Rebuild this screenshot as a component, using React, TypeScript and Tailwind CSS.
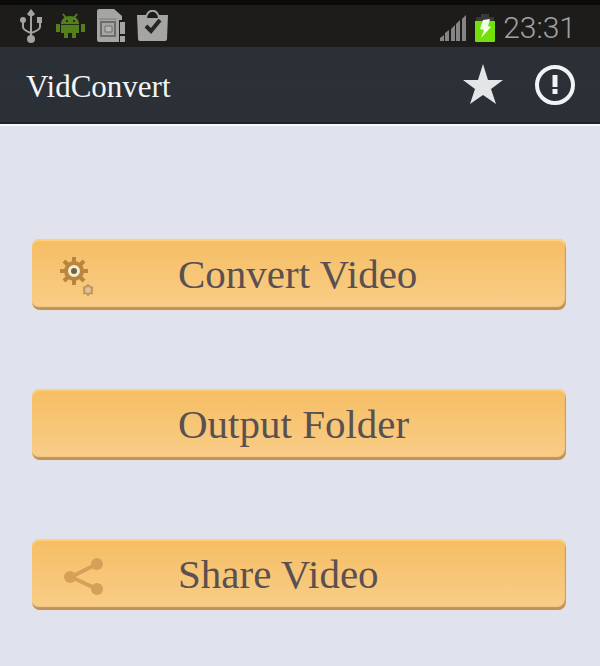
import type { ReactNode } from "react";

const UsbIcon = () => (
  <svg width="24" height="34" viewBox="0 0 24 34" fill="#a3a3a1">
    <path
      d="M11 4v26M3 12v6q0 3 8 6M20 12v6q0 3-9 6"
      fill="none"
      stroke="#a3a3a1"
      strokeWidth="2"
    />
    <path d="M11 0l4 5-2 2H9L7 5z" />
    <circle cx="3" cy="11" r="3" />
    <path d="M17 8h5v6h-5z" />
    <circle cx="11" cy="30" r="4" />
  </svg>
);

const AndroidIcon = () => (
  <svg width="29" height="26" viewBox="0 0 29 26" fill="#52801a">
    <path d="M7 1l3 4M21 1l-3 4" stroke="#52801a" strokeWidth="2" />
    <path d="M5 11c0-5 4-8 9-8s9 3 9 8z" />
    <path d="M5 12h18v8H5z" />
    <path d="M0 11h4v8H0zM25 11h4v8h-4zM8 20h4v5H8zM16 20h4v5h-4z" />
    <path d="M10 7h2v2h-2zM17 7h2v2h-2zM5 11h18v1H5z" fill="#262b17" />
  </svg>
);

const SdCardIcon = () => (
  <svg width="28" height="34" viewBox="0 0 28 34" fill="#a5a5a3">
    <path d="M0 2q0-2 2-2h15l8 7v4h-3v22H2q-2 0-2-2z" />
    <path d="M23 13h5v12h-5zM23 27h5v6h-5z" />
    <path d="M4 13h14v14H4z" fill="none" stroke="#6c6c6a" strokeWidth="2" />
    <path d="M8 17h7v6H8z" fill="#b5b5b3" stroke="#6c6c6a" />
    <path d="M2 10h18" stroke="#7d7d7b" />
  </svg>
);

const BagIcon = () => (
  <svg width="31" height="32" viewBox="0 0 31 32">
    <path d="M9 9c0-11 13-11 13 0" fill="none" stroke="#a5a5a3" strokeWidth="2" />
    <path d="M0 5h10l-1 3h13l-1-3h10l-1 24q0 2-2 2H3q-2 0-2-2z" fill="#a5a5a3" />
    <path d="M9 16l5 5 9-11" fill="none" stroke="#252523" strokeWidth="4" />
  </svg>
);

const SignalIcon = () => (
  <svg width="27" height="27" viewBox="0 0 27 27" fill="#858585">
    <path d="M0 26v-3l4-3v6zM5 26v-8l4-3v11zM11 26V14l4-4v16zM16 26V9l4-4v21zM22 26V4l4-4v26z" />
  </svg>
);

const BatteryIcon = () => (
  <svg width="20" height="30" viewBox="0 0 20 30">
    <path d="M6 1h8v4H6zM1 4h18v5H1z" fill="#373a35" />
    <path d="M0 8h20v20q0 1-1 1H1q-1 0-1-1z" fill="#73df0b" />
    <path d="M8 7l7-1-2 7 3 1-10 11 3-8-4-1z" fill="#f1ffe5" />
  </svg>
);

const StarIcon = () => (
  <svg width="42" height="42" viewBox="0 0 42 42" fill="#e4e5e6">
    <path d="M21 0l5 16h15L29 25l5 15-13-9-13 9 5-15L1 16h15z" />
  </svg>
);

const AlertIcon = () => (
  <svg width="42" height="42" viewBox="0 0 42 42" fill="none" stroke="#f2f3f4">
    <circle cx="21" cy="21" r="18" strokeWidth="4" />
    <path d="M21 11v12M21 25v5" strokeWidth="5" />
  </svg>
);

const GearsIcon = () => (
  <svg width="36" height="42" viewBox="0 0 36 42" fill="none">
    <path
      d="M14 1v28M0 15h28M4 5l20 20M24 5L4 25"
      stroke="#b9853f"
      strokeWidth="4"
    />
    <circle cx="14" cy="15" r="8" fill="#f7ebd3" stroke="#b9853f" strokeWidth="4" />
    <circle cx="14" cy="15" r="3" fill="#6e6340" />
    <path d="M28 28v12M23 31l10 7M33 31l-10 7" stroke="#c79a62" strokeWidth="2" />
    <circle cx="28" cy="34" r="4" fill="#e2c296" stroke="#c1935f" strokeWidth="2" />
  </svg>
);

const ShareIcon = () => (
  <svg width="44" height="38" viewBox="0 0 44 38" fill="#d5a159">
    <path d="M37 6L11 19l26 12" fill="none" stroke="#d5a159" strokeWidth="4" />
    <circle cx="37" cy="6" r="6" />
    <circle cx="10" cy="19" r="6" />
    <circle cx="37" cy="31" r="6" />
  </svg>
);

const MenuButton = ({ label, icon }: { label: string; icon?: ReactNode }) => (
  <button
    type="button"
    className="flex h-[71px] w-full items-center rounded-lg bg-linear-to-b from-[#f6bd63] to-[#f8ce88] pl-7 text-left text-[41px] text-[#5a5050] shadow-[inset_0_2px_1px_#ffd07c,inset_-1px_-3px_1px_#c1915b,0_0_2px_#ecdcc6]"
  >
    <span className="flex w-[118px] shrink-0 pt-1">{icon}</span>
    <span className="pb-px leading-none whitespace-nowrap">{label}</span>
  </button>
);

export default function App() {
  return (
    <div className="min-h-screen bg-[#e0e3ed] font-['Liberation_Serif',serif]">
      <div className="flex h-[47px] items-center justify-between border-t-[5px] border-[#0b0b0b] bg-[#1d1c1b] pr-6 pl-5">
        <div className="flex items-center gap-3">
          <UsbIcon />
          <AndroidIcon />
          <SdCardIcon />
          <BagIcon />
        </div>
        <div className="flex items-center gap-2 pt-1">
          <SignalIcon />
          <BatteryIcon />
          <span className="font-['Roboto',sans-serif] text-[30px] leading-none font-light text-[#a3a3a3]">
            23:31
          </span>
        </div>
      </div>
      <header className="flex h-[77px] items-center justify-between border-b-2 border-[#20242a] bg-linear-to-b from-[#2c3036] to-[#2b3037] pr-6 pl-[26px]">
        <h1 className="pt-1 text-[31px] leading-none text-[#f4f5f6]">VidConvert</h1>
        <div className="flex items-center gap-[30px]">
          <button type="button" aria-label="Rate">
            <StarIcon />
          </button>
          <button type="button" aria-label="About">
            <AlertIcon />
          </button>
        </div>
      </header>
      <main className="flex flex-col gap-[79px] border-t-2 border-[#f6f8fc] pt-[113px] pr-[34px] pb-14 pl-8">
        <MenuButton label="Convert Video" icon={<GearsIcon />} />
        <MenuButton label="Output Folder" />
        <MenuButton label="Share Video" icon={<ShareIcon />} />
      </main>
    </div>
  );
}
